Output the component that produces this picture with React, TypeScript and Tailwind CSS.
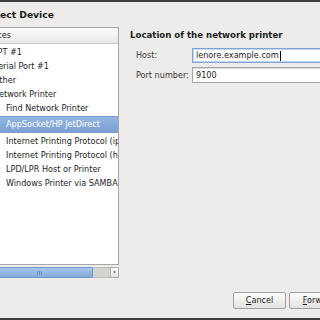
export default function App() {
  const parents = ["LPT #1", "Serial Port #1", "Other", "Network Printer"];
  const after = [
    "Internet Printing Protocol (ipp)",
    "Internet Printing Protocol (https)",
    "LPD/LPR Host or Printer",
    "Windows Printer via SAMBA",
  ];

  return (
    <div className="w-[320px] h-[320px] overflow-hidden flex flex-col bg-[#edeceb] text-[#1c1c1c] font-['DejaVu_Sans',sans-serif]">
      <div className="h-[2px] shrink-0 bg-[#3c3c3c]" />
      <div className="h-[25px] shrink-0 flex items-center -ml-[16px] text-[9.2px] font-bold whitespace-nowrap">
        Select Device
      </div>

      <div className="h-[251px] shrink-0 flex">
        {/* device list */}
        <div className="-ml-[30px] w-[149px] shrink-0 flex flex-col">
          <div className="h-[238px] bg-white border border-[#a8a6a3] flex flex-col overflow-hidden text-[8.1px] whitespace-nowrap">
            <div className="h-[16px] shrink-0 flex items-center pl-[8px] bg-gradient-to-b from-[#fbfbfa] to-[#e9e8e6] border-b border-[#c9c7c4]">
              Devices
            </div>
            <div className="pt-[1px]">
              {parents.map((p) => (
                <div key={p} className="h-[14px] leading-[14px] pl-[22px]">
                  {p}
                </div>
              ))}
              <div className="h-[14px] leading-[14px] pl-[35px]">Find Network Printer</div>
              <div className="my-[1px] h-[17px] flex items-center pl-[35px] text-white bg-gradient-to-b from-[#93b6e2] to-[#7ba1d4] border-y border-[#789dd0]">
                AppSocket/HP JetDirect
              </div>
              {after.map((p) => (
                <div key={p} className="h-[14px] leading-[14px] pl-[35px]">
                  {p}
                </div>
              ))}
            </div>
          </div>

          {/* horizontal scrollbar */}
          <div className="mt-[2px] h-[11px] flex">
            <div className="flex-1 flex items-center justify-end pr-[50px] rounded-l-[2px] border border-[#7197cc] bg-gradient-to-b from-[#a9c5ea] to-[#85aad9]">
              <div className="flex gap-[1px]">
                <div className="w-[1px] h-[4px] bg-[#6a8fc2]" />
                <div className="w-[1px] h-[4px] bg-[#6a8fc2]" />
                <div className="w-[1px] h-[4px] bg-[#6a8fc2]" />
              </div>
            </div>
            <div className="w-[17px] bg-[#d5d3d0] border-y border-[#bdbbb8]" />
            <div className="w-[9px] flex items-center justify-center bg-gradient-to-b from-[#ffffff] to-[#e4e3e1] border border-[#aeaca9] text-[7px] leading-none text-[#333] font-bold">
              ›
            </div>
          </div>
        </div>

        {/* location form */}
        <div className="flex-1 min-w-0 pl-[11px] pt-[2px] whitespace-nowrap">
          <div className="text-[8.6px] leading-[12px] font-bold">Location of the network printer</div>
          <div className="mt-[7px] pl-[6px] grid grid-cols-[56px_140px] gap-y-[4px] text-[8.1px]">
            <div className="h-[15px] flex items-center text-[#3a3a3a]">Host:</div>
            <div className="h-[15px] flex items-center pl-[3px] bg-white border border-[#7fa3d3] shadow-[inset_0_0_0_1px_#c4d6ee]">
              lenore.example.com
              <span className="ml-[1px] w-[1px] h-[10px] bg-black" />
            </div>
            <div className="h-[16px] flex items-center text-[#3a3a3a]">Port number:</div>
            <div className="h-[16px] flex items-center pl-[3px] bg-white border border-[#a7a5a2] shadow-[inset_0_1px_0_#dcdbd9]">
              9100
            </div>
          </div>
        </div>
      </div>

      {/* buttons */}
      <div className="h-[14px] shrink-0" />
      <div className="h-[17px] shrink-0 flex gap-[3px] pl-[233px] text-[8.1px] whitespace-nowrap">
        <div className="w-[53px] shrink-0 flex items-center justify-center rounded-[2px] border border-[#a3a19e] bg-gradient-to-b from-[#fdfdfd] to-[#e2e1df]">
          <span>
            <span className="underline">C</span>ancel
          </span>
        </div>
        <div className="w-[60px] shrink-0 flex items-center justify-center rounded-[2px] border border-[#a3a19e] bg-gradient-to-b from-[#fdfdfd] to-[#e2e1df]">
          <span>
            <span className="underline">F</span>orward
          </span>
        </div>
      </div>
      <div className="h-[9px] shrink-0" />
      <div className="h-[2px] shrink-0 bg-[#3c3c3c]" />
    </div>
  );
}
